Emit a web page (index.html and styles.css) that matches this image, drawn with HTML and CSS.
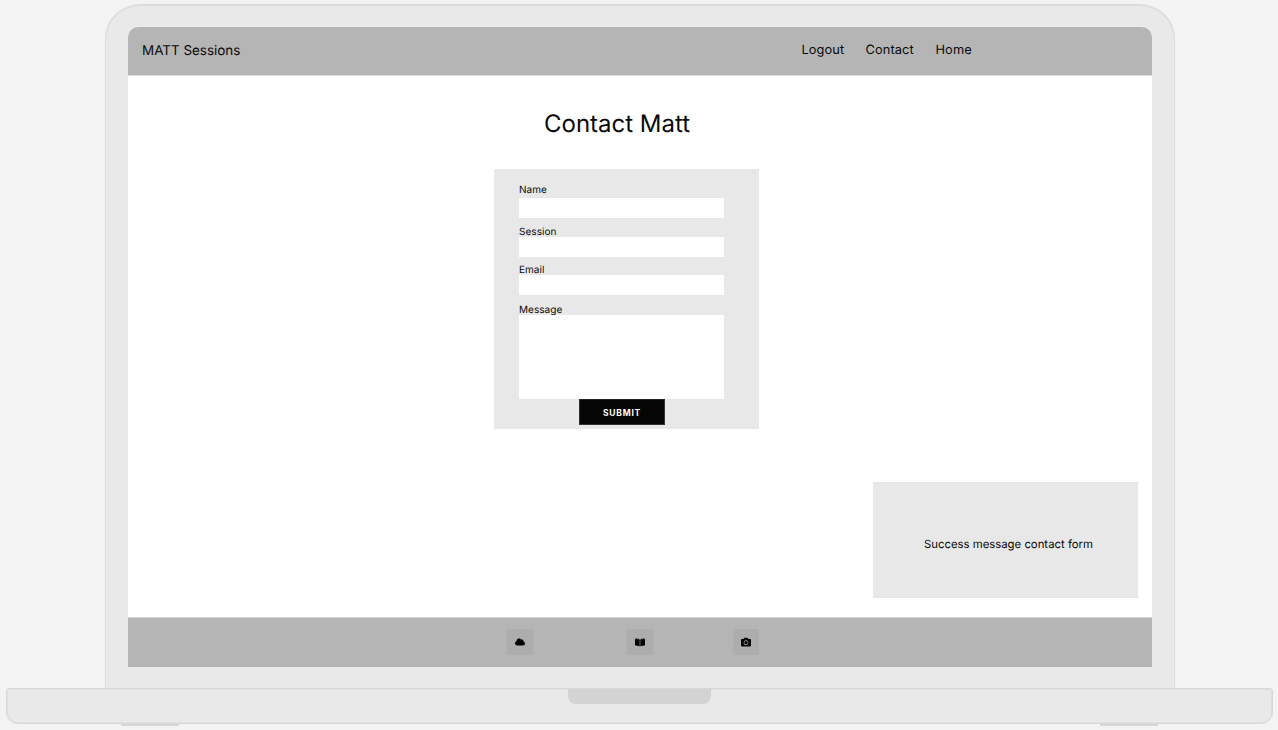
FILE: index.html
```html
<!DOCTYPE html>
<html lang="en">
<head>
<meta charset="utf-8">
<title>MATT Sessions – Contact</title>
<link rel="stylesheet" href="styles.css">
</head>
<body>
<div class="laptop">
  <div class="lid">
    <div class="screen">
      <header class="topbar">
        <div class="brand">MATT Sessions</div>
        <nav class="nav"><a class="nav-logout">Logout</a><a class="nav-contact">Contact</a><a class="nav-home">Home</a></nav>
      </header>
      <main class="content">
        <h1 class="title">Contact Matt</h1>
        <form class="form">
          <label class="field field-name"><span class="label">Name</span><i class="input"></i></label>
          <label class="field field-session"><span class="label">Session</span><i class="input"></i></label>
          <label class="field field-email"><span class="label">Email</span><i class="input"></i></label>
          <label class="field field-message"><span class="label">Message</span><i class="input input-area"></i></label>
          <button class="submit" type="button">SUBMIT</button>
        </form>
        <div class="success"><span>Success message contact form</span></div>
      </main>
      <footer class="footer">
        <a class="social"><svg viewBox="0 0 640 512" width="10" height="8"><path d="M537.600 226.600c4.100-10.700 6.400-22.400 6.400-34.600 0-53-43-96-96-96-19.700 0-38.100 6-53.300 16.200C367 64.200 315.300 32 256 32c-88.400 0-160 71.600-160 160 0 2.700.1 5.400.2 8.100C40.200 219.800 0 273.200 0 336c0 79.500 64.500 144 144 144h368c70.700 0 128-57.300 128-128 0-61.900-44-113.600-102.400-125.400z"/></svg></a>
        <a class="social"><svg viewBox="0 0 576 512" width="10" height="9"><path d="M542 32c-55 3-163 14-230 55-5 3-7 8-7 13v364c0 11 12 19 23 13 69-35 169-44 219-47 17-1 29-14 29-30V62c0-17-15-31-34-30zM264 87C197 46 89 35 34 32 15 31 0 45 0 62v338c0 16 12 29 29 30 50 3 150 12 219 47 11 6 23-2 23-13V100c0-5-2-10-7-13z"/></svg></a>
        <a class="social"><svg viewBox="0 0 512 512" width="10" height="10"><path fill-rule="evenodd" d="M512 144v288c0 26.500-21.500 48-48 48H48c-26.500 0-48-21.500-48-48V144c0-26.500 21.500-48 48-48h88l12.300-32.900c7-18.700 24.900-31.100 44.900-31.100h125.500c20 0 37.900 12.400 44.900 31.100L376 96h88c26.500 0 48 21.500 48 48zM376 288c0-66.200-53.800-120-120-120s-120 53.800-120 120 53.800 120 120 120 120-53.800 120-120zm-32 0c0 48.500-39.500 88-88 88s-88-39.500-88-88 39.500-88 88-88 88 39.500 88 88z"/></svg></a>
      </footer>
    </div>
  </div>
  <div class="base"><div class="notch"></div></div>
  <div class="feet"><i class="foot"></i><i class="foot"></i></div>
</div>
</body>
</html>
```
FILE: styles.css
```css
* { box-sizing: border-box; }
body {
  margin: 0;
  height: 730px;
  overflow: hidden;
  background: #f3f3f3;
  color: #0a0a0a;
  font-family: Inter, "Liberation Sans", sans-serif;
  text-rendering: geometricPrecision;
}
.laptop { padding-top: 4px; }
.lid {
  width: 1070px;
  height: 684px;
  margin-left: 105px;
  padding: 22px 0 0 22px;
  border: 1px solid #dadada;
  border-bottom: 0;
  border-radius: 35px 35px 0 0;
  background: #e9e9e9;
  box-shadow: inset 0 1px 0 #dcdcdc;
}
.screen {
  display: flex;
  flex-direction: column;
  width: 1024px;
  height: 640px;
  border-radius: 10px 10px 0 0;
  background: #fff;
  overflow: hidden;
}
.topbar {
  display: flex;
  height: 49px;
  padding-left: 14px;
  border-bottom: 1px solid #dcdcdc;
  background: #b5b5b5;
}
.brand {
  width: 659.500px;
  padding-top: 14px;
  font-size: 13.450px;
  line-height: 20px;
}
.nav {
  display: flex;
  padding-top: 14px;
  font-size: 12.800px;
  line-height: 20px;
  letter-spacing: 0.100px;
}
.nav-logout { width: 64px; }
.nav-contact { width: 70px; }
.content {
  flex: 1;
  display: flex;
  flex-direction: column;
}
.title {
  margin: 33px 0 0 416px;
  height: 30px;
  font-size: 24px;
  line-height: 30px;
  font-weight: 400;
}
.form {
  display: flex;
  flex-direction: column;
  width: 265px;
  height: 260px;
  margin: 30px 0 0 366px;
  padding: 14px 0 0 25px;
  background: #e8e8e8;
}
.field {
  display: flex;
  flex-direction: column;
  width: 205px;
  font-size: 10px;
  letter-spacing: 0.050px;
}
.label {
  height: 12px;
  line-height: 14px;
}
.input {
  height: 20px;
  background: #fff;
}
.input-area { height: 84px; }
.field-name { gap: 3px; }
.field-session { margin-top: 7px; }
.field-email { margin-top: 6px; }
.field-message { margin-top: 8px; }
.submit {
  width: 86px;
  height: 26px;
  margin: 0 0 0 60px;
  padding: 1px 0 0;
  border: 1px solid #333;
  border-top-color: #222;
  background: #050505;
  color: #fff;
  font: 700 8.500px/12px Inter, "Liberation Sans", sans-serif;
  letter-spacing: 0.800px;
}
.success {
  width: 265px;
  height: 116px;
  margin: 53px 0 0 745px;
  padding: 55px 0 0 51px;
  background: #e8e8e8;
  font-size: 11.350px;
  line-height: 15px;
  white-space: nowrap;
}
.footer {
  display: grid;
  grid-template-columns: 120.400px 106px 26px;
  height: 50px;
  padding: 11px 0 0 379px;
  border-top: 1px solid #d4d4d4;
  background: #b5b5b5;
}
.social {
  display: flex;
  align-items: center;
  justify-content: center;
  width: 26px;
  height: 26px;
  background: #adadad;
}
.base {
  display: flex;
  justify-content: center;
  width: 1267px;
  height: 36px;
  margin-left: 6px;
  border: 1px solid #d8d8d8;
  border-radius: 3px 3px 12px 12px;
  background: #e9e9e9;
  box-shadow: inset 0 0 0 1px #e0e0e0;
}
.notch {
  width: 143px;
  height: 15px;
  border-radius: 0 0 8px 8px;
  background: #d3d3d3;
}
.feet {
  display: flex;
  justify-content: space-between;
  width: 1037px;
  margin-left: 121px;
}
.foot {
  width: 58px;
  height: 2px;
  background: #d6d6d6;
}
```
